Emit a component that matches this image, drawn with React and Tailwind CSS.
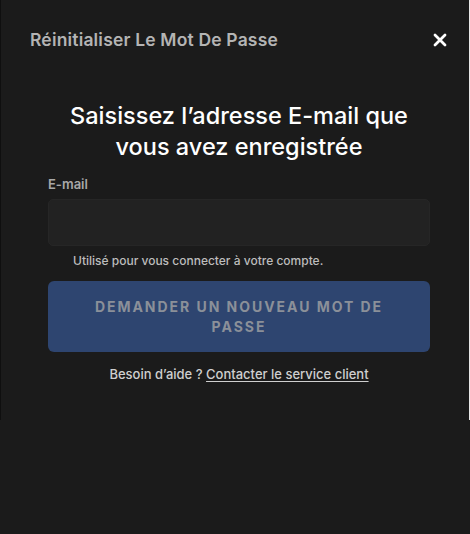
import React, { useState } from 'react';

export default function App() {
  const [email, setEmail] = useState('');

  return (
    <div className="w-[470px] h-[534px] bg-[#1b1b1b] text-white" style={{ fontFamily: 'Inter, "Noto Sans", sans-serif' }}>
      <div className="h-[420px] border-l border-[#0f0f0f] border-r border-r-[#e8e8e8]">
        {/* Header */}
        <div className="flex items-center justify-between pl-[29px] pr-[22px] pt-[28px]">
          <h2 className="text-[17.5px] font-semibold tracking-[0.01em] text-[#b4b4b4] leading-6">Réinitialiser Le Mot De Passe</h2>
          <button aria-label="Fermer" className="text-white">
            <svg width="14" height="14" viewBox="0 0 14 14">
              <path d="M2 2 L12 12 M12 2 L2 12" stroke="currentColor" strokeWidth="2.8" strokeLinecap="round" />
            </svg>
          </button>
        </div>

        {/* Body */}
        <div className="pl-[47px] pr-[39px]">
          <h1 className="mt-[48px] text-center text-[23.5px] font-medium leading-[31px] text-white">
            Saisissez l’adresse E-mail que<br />vous avez enregistrée
          </h1>

          <label className="block mt-[13px] text-[13px] font-semibold leading-[18px] text-[#a8a8a8]">E-mail</label>
          <input
            value={email}
            onChange={e => setEmail(e.target.value)}
            className="mt-[6px] w-full h-[47px] rounded-[5px] bg-[#222222] border border-[#262626] px-3 text-sm text-white outline-none"
          />
          <p className="mt-[7px] pl-[25px] text-[12px] font-medium leading-4 text-[#bdbdbd]">Utilisé pour vous connecter à votre compte.</p>

          <button className="mt-[12px] w-full h-[71px] rounded-[6px] bg-[#2e4570] px-10 text-[14px] font-bold uppercase tracking-[0.14em] leading-[20px] text-[#8b9099]">
            Demander un nouveau mot de passe
          </button>

          <p className="mt-[12px] text-center text-[13px] font-medium leading-5 text-[#cfcfcf]">
            Besoin d’aide ? <a href="#" className="underline underline-offset-2">Contacter le service client</a>
          </p>
        </div>
      </div>
    </div>
  );
}
